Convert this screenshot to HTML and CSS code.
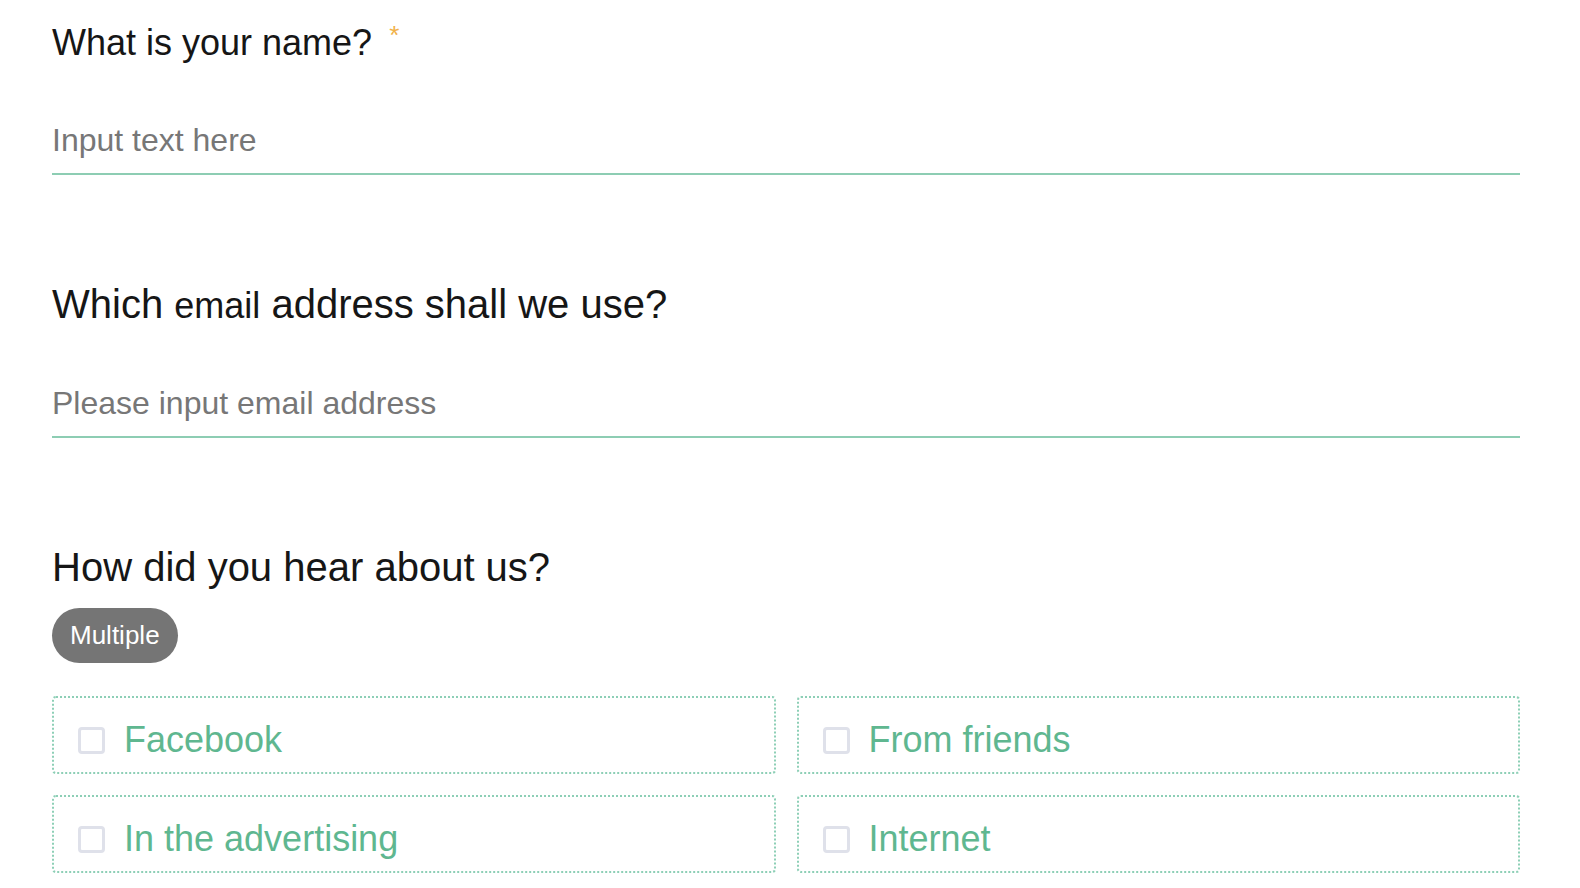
FILE: index.html
```html
<!doctype html>
<html lang="en">
<head>
    <meta charset="UTF-8">
    <meta name="viewport" content="width=device-width, initial-scale=1.0">
    <title>Survey</title>
    <link rel="stylesheet" href="styles.css">
</head>
<body>
<div class="form">
    <div class="question">
        <div class="question-title title-sm">What is your name?<span class="required">*</span></div>
        <input class="question-input" type="text" placeholder="Input text here">
    </div>

    <div class="question">
        <div class="question-title">Which <span class="small">email</span> address shall we use?</div>
        <input class="question-input" type="email" placeholder="Please input email address">
    </div>

    <div class="question">
        <div class="question-title">How did you hear about us?</div>
        <span class="tag">Multiple</span>
        <div class="options">
            <label class="option"><span class="option-box"></span>Facebook</label>
            <label class="option"><span class="option-box"></span>From friends</label>
            <label class="option"><span class="option-box"></span>In the advertising</label>
            <label class="option"><span class="option-box"></span>Internet</label>
        </div>
    </div>
</div>
</body>
</html>
```

FILE: styles.css
```css
* {
    margin: 0;
    padding: 0;
    box-sizing: border-box;
}
html,
body {
    overflow: hidden;
}
body {
    font-family: "Liberation Sans", Arial, Helvetica, sans-serif;
    color: #1a1a1a;
    background: #fff;
}
.form {
    width: 1468px;
    margin-left: 52px;
    padding-top: 19px;
}
.question + .question {
    margin-top: 105px;
}
.question-title {
    font-size: 40px;
    line-height: 48px;
    color: #161616;
}
.question-title.title-sm {
    font-size: 36px;
}
.question-title .small {
    font-size: 36px;
}
.required {
    font-size: 26px;
    line-height: 32px;
    vertical-align: top;
    margin-left: 17px;
    color: #f1b24a;
}
.question-input {
    display: block;
    width: 100%;
    height: 67px;
    margin-top: 41px;
    border: none;
    border-bottom: 2px solid #8dcdb3;
    outline: none;
    font-family: inherit;
    font-size: 32px;
    color: #333;
    background: transparent;
}
.question-input::placeholder {
    color: #777;
}
.tag {
    display: inline-block;
    margin-top: 17px;
    height: 55px;
    line-height: 55px;
    padding: 0 18px;
    border-radius: 28px;
    background: #757575;
    color: #fff;
    font-size: 26px;
}
.options {
    display: grid;
    grid-template-columns: 1fr 1fr;
    gap: 21px;
    margin-top: 33px;
}
.option {
    display: flex;
    align-items: center;
    height: 78px;
    padding: 10px 0 0 24px;
    border: 2px dotted #8dcfb6;
    border-radius: 4px;
    font-size: 36px;
    color: #5fb790;
    cursor: pointer;
}
.option-box {
    width: 27px;
    height: 27px;
    margin-right: 19px;
    border: 3px solid #dfe1ea;
    border-radius: 4px;
    flex-shrink: 0;
}
```
